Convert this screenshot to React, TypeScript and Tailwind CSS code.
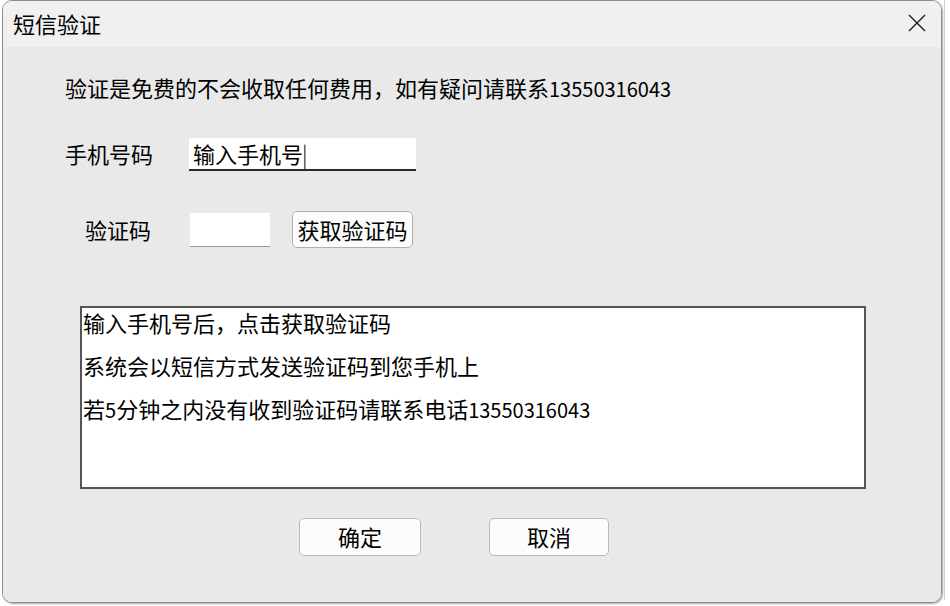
import React from "react";

const FONT = "font-['Noto_Sans_CJK_SC',sans-serif]";

function Num({ children }: { children: React.ReactNode }) {
  return <span className="text-[20px]">{children}</span>;
}

function CloseIcon() {
  return (
    <svg width="18" height="18" viewBox="0 0 18 18" className="text-[#1a1a1a]">
      <path d="M1 1 L17 17 M17 1 L1 17" stroke="currentColor" strokeWidth="1.4" fill="none" />
    </svg>
  );
}

export default function App() {
  return (
    <div className={`w-[950px] h-[606px] bg-white overflow-hidden flex ${FONT} text-black`}>
      {/* Window */}
      <div className="ml-[2px] w-[940px] h-[603px] rounded-[10px] border border-[#8c8c8c] overflow-hidden flex flex-col shadow-[1px_1px_2px_rgba(0,0,0,0.35)]">
        {/* Title bar */}
        <div className="h-[46px] shrink-0 bg-[#f0f0f0] flex items-center justify-between pl-[10px] pr-[15px] pb-[2px]">
          <span className="text-[22px] leading-none">短信验证</span>
          <CloseIcon />
        </div>

        {/* Body */}
        <div className="flex-1 bg-[#e9e9e9] flex flex-col text-[22px]">
          <div className="mt-[25px] ml-[62px] h-[30px] leading-[30px] whitespace-nowrap">
            验证是免费的不会收取任何费用，如有疑问请联系<Num>13550316043</Num>
          </div>

          {/* Phone row */}
          <div className="mt-[36px] h-[33px] flex items-center">
            <span className="ml-[62px] w-[124px] leading-none -mt-[3px]">手机号码</span>
            <div className="w-[227px] h-[33px] bg-white border-b-2 border-[#2a2a2a] flex items-center pl-[4px] pb-[2px] leading-none">
              输入手机号<span className="font-light -ml-[1px]">|</span>
            </div>
          </div>

          {/* Code row */}
          <div className="mt-[40px] h-[37px] flex items-center">
            <span className="ml-[82px] w-[105px] leading-none -mt-[2px]">验证码</span>
            <div className="w-[80px] h-[34px] bg-white border-b border-[#9a9a9a]" />
            <button className="ml-[22px] w-[121px] h-[37px] bg-[#fcfcfc] border border-[#b0b0b0] rounded-[5px] text-[22px] leading-none flex items-center justify-center pb-[2px]">
              获取验证码
            </button>
          </div>

          {/* Info box */}
          <div className="mt-[58px] ml-[77px] w-[786px] h-[183px] bg-white border-2 border-[#555] flex flex-col gap-[15px] pl-[1px] whitespace-nowrap">
            <div className="h-[28px] leading-[28px]">输入手机号后，点击获取验证码</div>
            <div className="h-[28px] leading-[28px]">系统会以短信方式发送验证码到您手机上</div>
            <div className="h-[28px] leading-[28px]">
              若<Num>5</Num>分钟之内没有收到验证码请联系电话<Num>13550316043</Num>
            </div>
          </div>

          {/* Buttons */}
          <div className="mt-[29px] flex">
            <button className="ml-[296px] w-[122px] h-[38px] bg-[#fcfcfc] border border-[#b8b8b8] rounded-[5px] text-[22px] leading-none flex items-center justify-center pb-[2px]">
              确定
            </button>
            <button className="ml-[68px] w-[120px] h-[38px] bg-[#fcfcfc] border border-[#b8b8b8] rounded-[5px] text-[22px] leading-none flex items-center justify-center pb-[2px]">
              取消
            </button>
          </div>
        </div>
      </div>
      <div className="ml-[2px] w-px h-[600px] bg-[#d0d0d0]" />
    </div>
  );
}
